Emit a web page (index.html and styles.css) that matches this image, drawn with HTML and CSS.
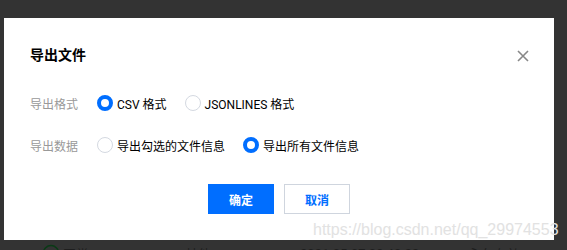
FILE: index.html
```html
<!DOCTYPE html>
<html lang="zh">
<head>
<meta charset="utf-8">
<link rel="stylesheet" href="styles.css">
</head>
<body>
<div class="page">
  <div class="dialog">
    <div class="header">
      <h1 class="title">导出文件</h1>
      <button class="close" aria-label="关闭">
        <svg width="12" height="12" viewBox="0 0 12 12"><path d="M1 1L11 11M11 1L1 11" stroke="#888" stroke-width="1.6" fill="none"/></svg>
      </button>
    </div>
    <div class="form">
      <div class="row">
        <span class="label">导出格式</span>
        <div class="options">
          <label class="radio checked"><span class="dot"></span>CSV 格式</label>
          <label class="radio"><span class="dot"></span>JSONLINES 格式</label>
        </div>
      </div>
      <div class="row">
        <span class="label">导出数据</span>
        <div class="options">
          <label class="radio"><span class="dot"></span>导出勾选的文件信息</label>
          <label class="radio checked"><span class="dot"></span>导出所有文件信息</label>
        </div>
      </div>
    </div>
    <div class="footer">
      <button class="btn primary">确定</button>
      <button class="btn">取消</button>
    </div>
    <div class="watermark">https://blog.csdn.net/qq_29974553</div>
  </div>
  <div class="bgrow">
    <span class="status"><svg width="18" height="18" viewBox="0 0 18 18"><circle cx="9" cy="9" r="7.5" stroke="#0a3a16" stroke-width="1.6" fill="none"/></svg>正常</span>
    <span class="c2">其他</span>
    <span class="c3">2021-05-07 09:40:22</span>
    <span class="c4">永久有效</span>
  </div>
</div>
</body>
</html>
```

FILE: styles.css
```css
html, body {
  margin: 0;
  padding: 0;
  background: #333333;
  height: 250px;
  overflow: hidden;
}
body {
  font-family: Roboto, "Noto Sans CJK SC", sans-serif;
  font-size: 12px;
  color: #000;
}
.page {
  padding: 18px 0 0 4px;
}
.dialog {
  position: relative;
  width: 550px;
  height: 222px;
  background: #fff;
  box-sizing: border-box;
  padding: 0 0 0 26px;
}
.header {
  display: flex;
  align-items: center;
  justify-content: space-between;
  padding: 26px 25px 0 0;
  height: 20px;
}
.title {
  margin: 0;
  font-size: 14px;
  font-weight: bold;
  line-height: 20px;
  font-family: "Noto Sans CJK SC", sans-serif;
  color: #000;
}
.close {
  border: 0;
  background: none;
  padding: 0;
  width: 12px;
  height: 12px;
  display: flex;
  margin-top: 4px;
}
.form {
  display: flex;
  flex-direction: column;
  gap: 22px;
  padding-top: 29px;
}
.row {
  display: flex;
  align-items: center;
  height: 20px;
}
.label {
  width: 67px;
  color: #999;
  font-family: "Noto Sans CJK SC", sans-serif;
}
.options {
  display: flex;
  gap: 18px;
}
.radio {
  display: flex;
  align-items: center;
  color: #000;
  gap: 4px;
}
.dot {
  width: 16px;
  height: 16px;
  box-sizing: border-box;
  border: 1px solid #d4d9e1;
  border-radius: 50%;
  background: #fff;
}
.radio.checked .dot {
  border: 4px solid #006eff;
}
.footer {
  display: flex;
  justify-content: center;
  gap: 10px;
  padding: 29px 26px 0 0;
}
.btn {
  width: 66px;
  height: 30px;
  box-sizing: border-box;
  border: 1px solid #cfd5de;
  background: #fff;
  color: #006eff;
  font-family: "Noto Sans CJK SC", sans-serif;
  font-size: 12px;
  font-weight: bold;
  padding: 0;
}
.btn.primary {
  background: #006eff;
  border-color: #006eff;
  color: #fff;
}
.watermark {
  position: absolute;
  left: 309px;
  top: 203px;
  font-family: "Liberation Sans", Arial, sans-serif;
  font-size: 16px;
  color: #e2e2e2;
  white-space: nowrap;
}
.bgrow {
  display: flex;
  align-items: center;
  height: 20px;
  padding-top: 3px;
  color: #1e1e1e;
  font-size: 13px;
  font-family: "Noto Sans CJK SC", sans-serif;
}
.status {
  display: flex;
  align-items: center;
  gap: 3px;
  margin-left: 38px;
  width: 143px;
}
.c2 { width: 115px; }
.c3 { width: 168px; font-family: Roboto, sans-serif; }
```
